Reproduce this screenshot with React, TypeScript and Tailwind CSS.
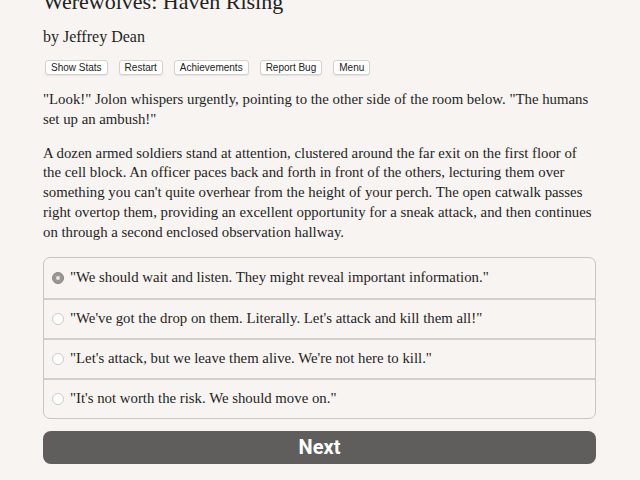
import React from "react";

const serif = { fontFamily: '"Liberation Serif", "Times New Roman", serif' };

const buttons = ["Show Stats", "Restart", "Achievements", "Report Bug", "Menu"];

const choices = [
  "\"We should wait and listen. They might reveal important information.\"",
  "\"We've got the drop on them. Literally. Let's attack and kill them all!\"",
  "\"Let's attack, but we leave them alive. We're not here to kill.\"",
  "\"It's not worth the risk. We should move on.\"",
];

export default function App() {
  return (
    <div className="h-[480px] overflow-hidden bg-[#f7f4f1] text-[#1f1f1f]" style={serif}>
      <div className="ml-[43px] w-[553px]">
        <h1 className="mt-[-11px] text-[22px] leading-[26px] text-[#222]">Werewolves: Haven Rising</h1>
        <div className="mt-[12px] text-[16px] leading-[20px]">by Jeffrey Dean</div>
        <div className="mt-[13px] flex gap-[11px] pl-[2px] font-['Liberation_Sans',Arial,sans-serif]">
          {buttons.map((b) => (
            <button
              key={b}
              className="h-[15px] rounded-[3px] border border-[#d6d3cf] bg-white px-[5px] text-[10px] leading-[13px] text-[#222] shadow-[0_1px_1px_rgba(0,0,0,0.08)]"
            >
              {b}
            </button>
          ))}
        </div>
        <div className="mt-[15px] text-[14.8px] leading-[19.8px]">
          <p>
            "Look!" Jolon whispers urgently, pointing to the other side of the room below. "The humans
            <br />
            set up an ambush!"
          </p>
          <p className="mt-[14px]">
            A dozen armed soldiers stand at attention, clustered around the far exit on the first floor of
            <br />
            the cell block. An officer paces back and forth in front of the others, lecturing them over
            <br />
            something you can't quite overhear from the height of your perch. The open catwalk passes
            <br />
            right overtop them, providing an excellent opportunity for a sneak attack, and then continues
            <br />
            on through a second enclosed observation hallway.
          </p>
        </div>
        <div className="mt-[14px] overflow-hidden rounded-[7px] border border-[#c9c6c2]">
          {choices.map((c, i) => (
            <label
              key={c}
              className={`flex h-[40px] items-center gap-[6px] pl-[8px] text-[14.8px] ${i > 0 ? "border-t-2 border-[#d2cfcb]" : ""}`}
            >
              <span
                className={`flex h-[12px] w-[12px] shrink-0 items-center justify-center rounded-full border ${
                  i === 0 ? "border-[#8a8886] bg-[#9a9896]" : "border-[#cfccc8] bg-white"
                }`}
              >
                {i === 0 && <span className="h-[4px] w-[4px] rounded-full bg-[#e8e6e4]" />}
              </span>
              <span>{c}</span>
            </label>
          ))}
        </div>
        <button className="mt-[12px] flex h-[33px] w-full items-center justify-center rounded-[8px] bg-[#5f5e5c] font-['Roboto',Arial,sans-serif] text-[20px] font-bold text-white">
          Next
        </button>
      </div>
    </div>
  );
}
